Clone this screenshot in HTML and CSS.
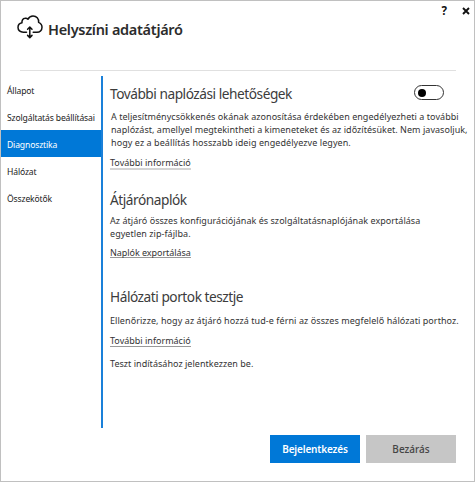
FILE: index.html
```
<!DOCTYPE html>
<html lang="hu">
<head>
<meta charset="utf-8">
<title>Helyszíni adatátjáró</title>
<link rel="stylesheet" href="styles.css">
</head>
<body>
<div class="window">
  <header class="header">
    <svg class="logo" width="26" height="24" viewBox="0 0 26 24" fill="none" stroke="#111" stroke-width="1.5" stroke-linecap="round" stroke-linejoin="round">
      <path d="M9.5 17.2H6.2C3.2 17.2 1 15.3 1 12.5C1 10 2.8 8.2 5 7.8C4.6 5.4 6 3.5 8 3.3C9.3 3.1 10.4 3.5 11 4.3C12 2.2 13.8 1 16 1C19.5 1 22 3.6 21.6 7.4C23.8 8.3 25 10.1 25 12.3C25 15.2 22.8 17.2 20 17.2H16.2"/>
      <path d="M12.8 12.3V22.2M10.6 14.2L12.8 12L15 14.2M10.6 20.4L12.8 22.6L15 20.4"/>
    </svg>
    <h1 class="title"><span>Helyszíni adatátjáró</span></h1>
    <div class="controls">
      <span class="help">?</span>
      <svg width="8" height="8" viewBox="0 0 8 8" stroke="#111" stroke-width="1.9"><path d="M1 1L7 7M7 1L1 7"/></svg>
    </div>
  </header>
  <div class="rule"></div>
  <div class="body">
    <nav class="nav">
      <a><span>Állapot</span></a>
      <a><span>Szolgáltatás beállításai</span></a>
      <a class="active"><span>Diagnosztika</span></a>
      <a><span>Hálózat</span></a>
      <a><span>Összekötők</span></a>
    </nav>
    <main class="content">
      <section class="logging">
        <div class="head">
          <h2>További naplózási lehetőségek</h2>
          <div class="toggle"><i></i></div>
        </div>
        <p><span class="a1">A teljesítménycsökkenés okának azonosítása érdekében engedélyezheti a további</span><br><span class="a2">naplózást, amellyel megtekintheti a kimeneteket és az időzítésüket. Nem javasoljuk,</span><br><span class="a3">hogy ez a beállítás hosszabb ideig engedélyezve legyen.</span></p>
        <a class="link soft"><span>További információ</span></a>
      </section>
      <section class="logs">
        <h2>Átjárónaplók</h2>
        <p><span class="b1">Az átjáró összes konfigurációjának és szolgáltatásnaplójának exportálása</span><br><span class="b2">egyetlen zip-fájlba.</span></p>
        <a class="link"><span class="l2">Naplók exportálása</span></a>
      </section>
      <section class="ports">
        <h2>Hálózati portok tesztje</h2>
        <p><span class="c1">Ellenőrizze, hogy az átjáró hozzá tud-e férni az összes megfelelő hálózati porthoz.</span></p>
        <a class="link"><span>További információ</span></a>
        <p class="note"><span class="c2">Teszt indításához jelentkezzen be.</span></p>
      </section>
    </main>
  </div>
  <footer class="footer">
    <button class="primary"><span>Bejelentkezés</span></button>
    <button class="secondary"><span>Bezárás</span></button>
  </footer>
</div>
</body>
</html>
```
FILE: styles.css
```
* { box-sizing: border-box; }
body {
  margin: 0;
  font-family: "Noto Sans", "Open Sans", sans-serif;
  font-size: 9px;
  color: #333;
  background: #fff;
}
.window {
  width: 475px;
  height: 482px;
  border: 1px solid #c0c0c0;
  display: flex;
  flex-direction: column;
  overflow: hidden;
}
span, h2 { white-space: nowrap; }
h1, h2, p { margin: 0; }
.header { height: 69px; display: flex; padding-left: 16px; flex: none; }
.logo { margin-top: 14px; flex: none; }
.title { margin: 17px 0 0 5px; font-size: 14.5px; line-height: 22px; font-weight: 600; color: #2c2c2c; letter-spacing: -0.3px; }
.controls { margin-left: auto; padding: 3px 4px 0 0; display: flex; gap: 15px; height: 15px; }
.controls svg { margin-top: 3px; }
.help { font-size: 11.5px; line-height: 14px; font-weight: 700; color: #111; }
.rule { height: 1px; margin: 0 18px 0 19px; background: #e0e0e0; flex: none; }
.body { display: flex; height: 352px; margin-top: 5px; flex: none; }
.nav { width: 102px; border-right: 2px solid #1a80d9; display: flex; flex-direction: column; }
.nav a { height: 27px; line-height: 31px; padding-left: 6px; color: #222; font-size: 8.6px; letter-spacing: -0.15px; }
.nav .active { background: #0078d7; color: #fff; }
.content { padding-left: 7px; flex: 1; }
h2 { font-size: 13.7px; line-height: 20px; font-weight: 400; color: #3c3c3c; letter-spacing: -0.47px; }
.a1 { letter-spacing: 0.045px; }
.a2 { letter-spacing: 0.04px; }
.a3 { letter-spacing: 0.07px; }
.b1 { letter-spacing: 0.035px; }
.b2 { letter-spacing: 0.05px; }
.c1 { letter-spacing: 0.07px; }
.c2 { letter-spacing: 0.03px; }
.l2 { letter-spacing: -0.05px; }
.head { display: flex; justify-content: space-between; padding-right: 30px; }
.toggle { width: 30px; height: 15px; border: 1px solid #333; border-radius: 8px; padding: 3px; margin-top: 1px; }
.toggle i { display: block; width: 8px; height: 8px; border-radius: 50%; background: #000; }
p { line-height: 13px; color: #333; }
.link { display: block; width: 81px; line-height: 13px; height: 13px; border-bottom: 1px solid #999; color: #333; }
.soft { border-bottom: 2px solid #d4d4d4; height: 14px; }
.logging { height: 106px; padding-top: 8px; }
.logging p { margin: 6px 0 7px 1px; }
.logs { height: 98px; padding-top: 8px; }
.logs p { margin: 4px 0 6px; }
.logs .link { height: 12px; }
.ports { padding-top: 7px; }
.ports p { margin: 7px 0; }
.ports .note { margin-top: 10px; }
.footer { display: flex; justify-content: flex-end; gap: 6px; padding-right: 18px; margin-top: 7px; }
button { width: 90px; height: 28px; border: 0; padding: 0; font: 600 10px "Noto Sans", sans-serif; }
.primary { background: #0078d7; color: #fff; letter-spacing: -0.15px; }
.secondary { background: #c6c6c6; color: #444; font-weight: 500; }
```
